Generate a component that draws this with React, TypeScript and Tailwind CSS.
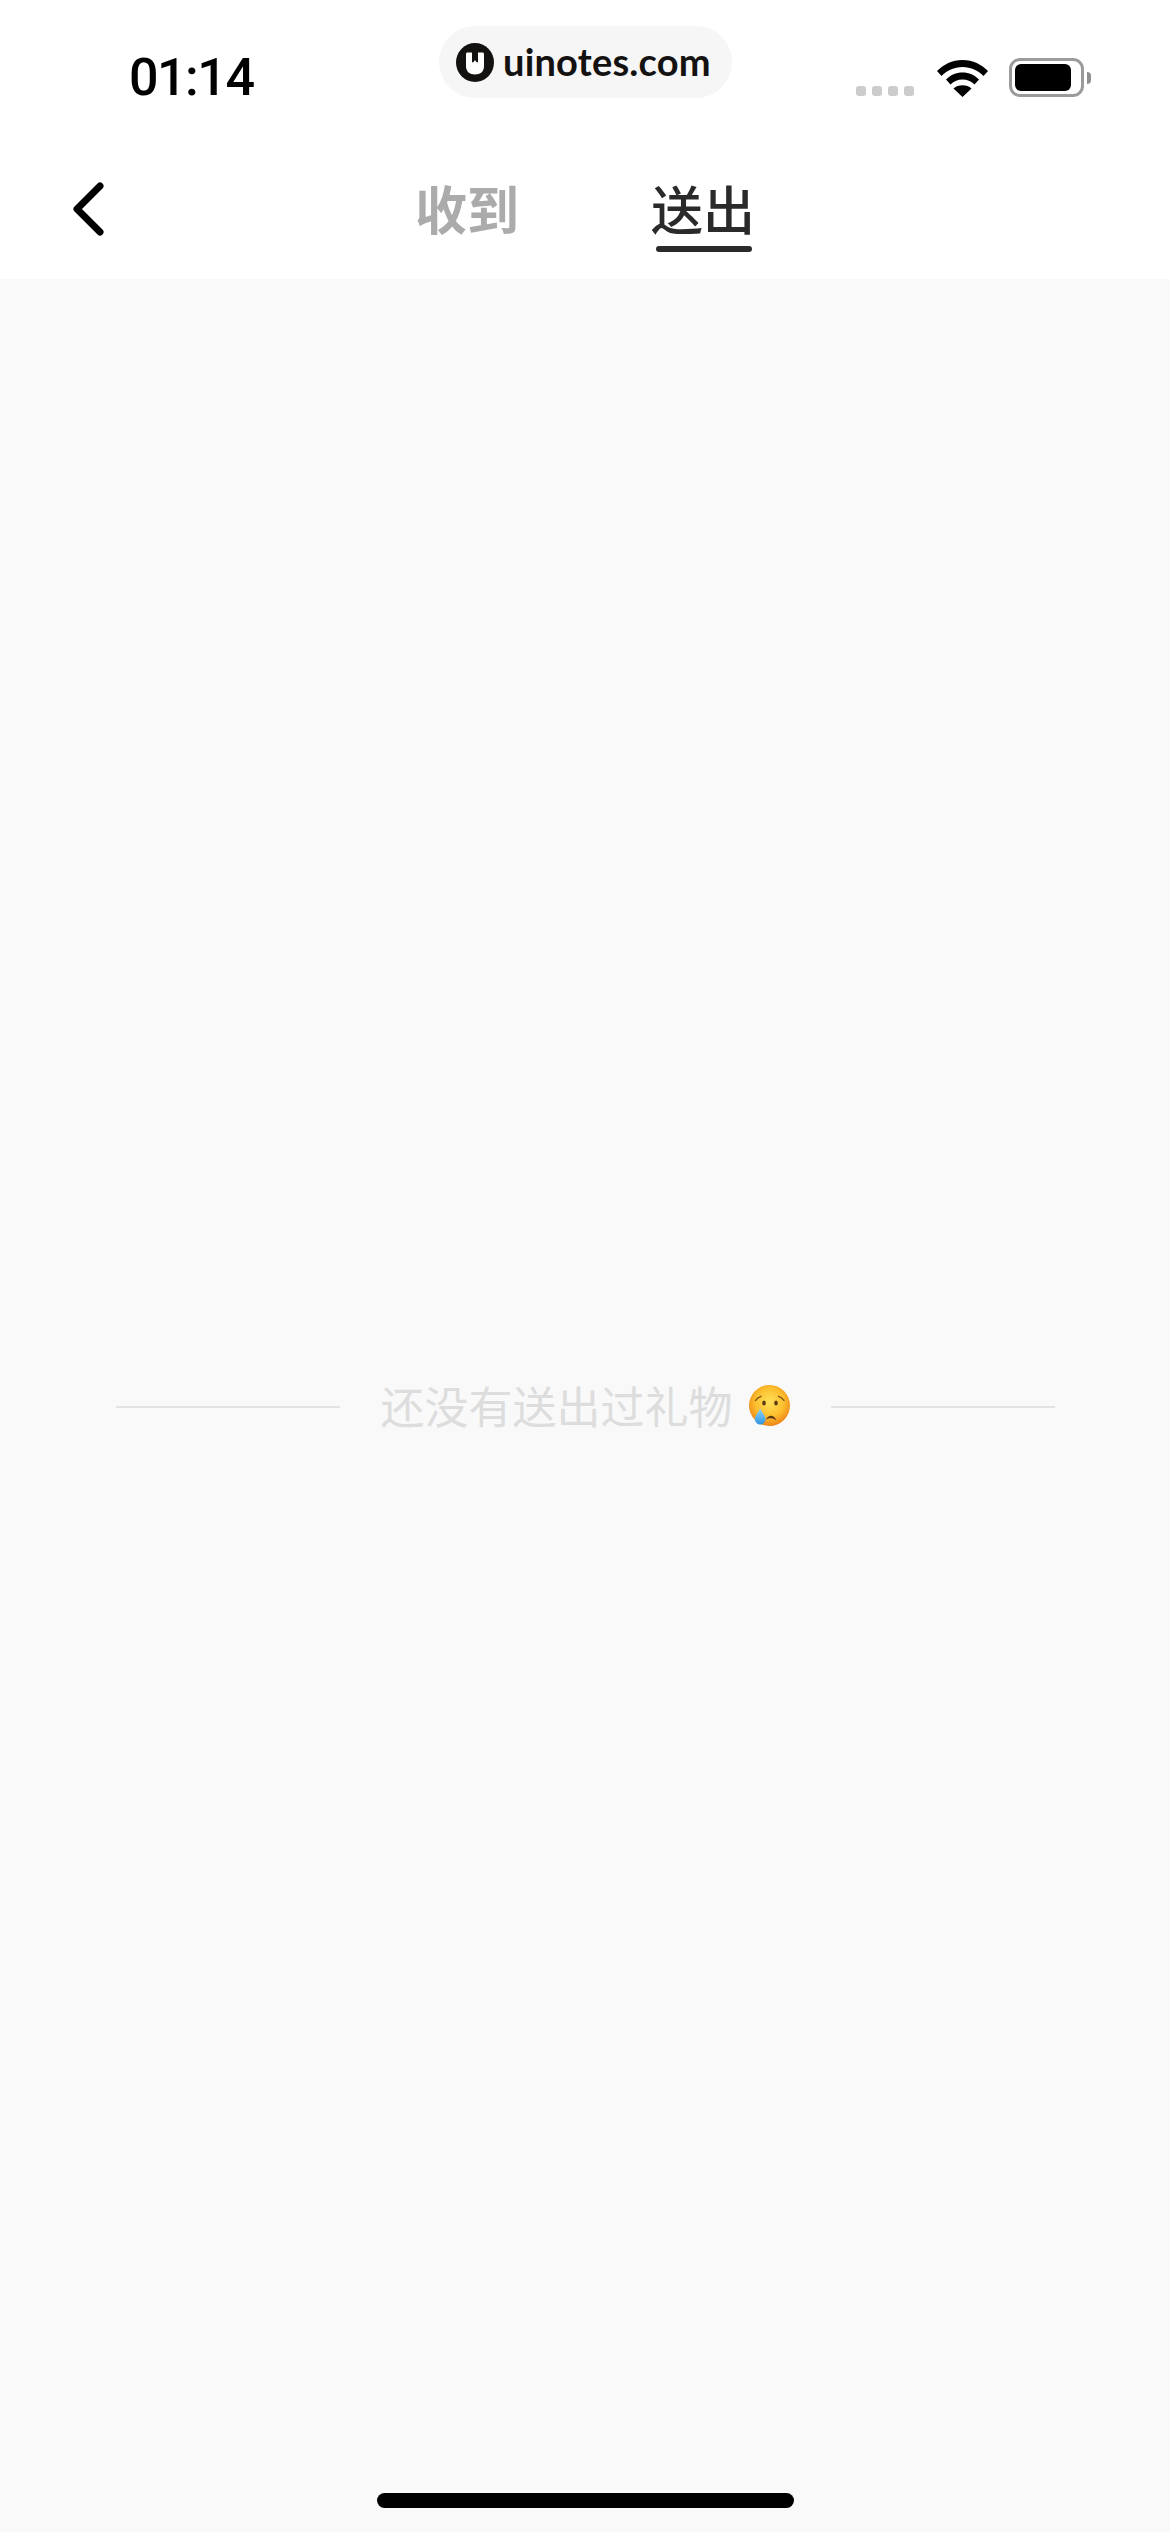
// App.tsx
const cjk = '[font-family:"Noto_Sans_CJK_SC",sans-serif]'

const UiNotesLogo = () => (
  <svg width="38" height="39" viewBox="0 0 38 39" className="shrink-0">
    <ellipse cx="19" cy="19.5" rx="19" ry="19.5" fill="#141211" />
    <path
      d="M10 11c0-1 .6-1.600 1.500-1.600h15c.9 0 1.500.6 1.500 1.600v12.500c0 5-3.700 8-9 8s-9-3-9-8z"
      fill="#fff"
    />
    <path d="M16 9v9.500c0 1 1 1.300 1.600.6l1.400-2.100 1.400 2.100c.6.7 1.600.4 1.600-.6V9z" fill="#141211" />
  </svg>
)

const WifiIcon = () => (
  <svg width="51" height="37" viewBox="0 0 51 37" className="shrink-0">
    <path d="M0 14.500C6.500 8 15 3.500 25.500 3.500S44.500 8 51 14.500l-4.500 5C41 14 34 10.500 25.500 10.500S10 14 4.500 19.500z" transform="translate(0 -3.500)" />
    <path d="M9 21c4.500-4.500 10-7 16.500-7S37.500 16.500 42 21l-4.500 5c-3.500-3.200-7.500-5-12-5s-8.500 1.800-12 5z" transform="translate(0 -1.500)" />
    <path d="M16.500 28.500c2.500-2 5.500-3.200 9-3.200s6.500 1.200 9 3.200L25.500 37z" />
  </svg>
)

const Battery = () => (
  <div className="flex items-center ml-[21px]">
    <div className="w-[75px] h-[39px] rounded-[11px] border-[3px] border-[#9b9b9b] p-[3px]">
      <div className="w-[56px] h-full rounded-[6px] bg-black" />
    </div>
    <div className="w-[4px] h-[12px] ml-[3px] rounded-r-full bg-[#8f8f8f]" />
  </div>
)

// emoji font is not available, so the crying face is drawn
const CryingFace = () => (
  <svg width="41" height="41" viewBox="0 0 41 41" className="shrink-0 ml-[16px] mb-[3px]">
    <defs>
      <radialGradient id="face" cx="50%" cy="42%" r="58%">
        <stop offset="0%" stopColor="#ffe05a" />
        <stop offset="60%" stopColor="#fcbf2e" />
        <stop offset="100%" stopColor="#ee8418" />
      </radialGradient>
      <linearGradient id="tear" x1="0" y1="0" x2="0" y2="1">
        <stop offset="0%" stopColor="#8fd4f8" />
        <stop offset="100%" stopColor="#2f95e0" />
      </linearGradient>
    </defs>
    <circle cx="20.500" cy="20.500" r="20.500" fill="url(#face)" />
    <ellipse cx="15" cy="18" rx="1.800" ry="2.600" fill="#5b3a14" />
    <ellipse cx="27" cy="18" rx="1.800" ry="2.600" fill="#5b3a14" />
    <path d="M6.500 15.500c1.200-2 3-3.500 5.500-4.200" fill="none" stroke="#7a4e18" strokeWidth="1.400" strokeLinecap="round" />
    <path d="M29.500 11.300c2.500.7 4.300 2.200 5.500 4.200" fill="none" stroke="#7a4e18" strokeWidth="1.400" strokeLinecap="round" />
    <path d="M17 34.500c1-2.500 3-3.800 5-3.800 2.300 0 4.200 1.500 5.300 4.500-1.800-1.300-3.400-2-5.300-2-1.800 0-3.500.4-5 1.300z" fill="#5b3a14" />
    <path d="M11.200 23.500c1.800 4 5.300 7 5.300 10.700a5.300 5.300 0 0 1-10.600 0c0-3.700 3.500-6.700 5.300-10.700z" fill="url(#tear)" />
  </svg>
)

export default function App() {
  return (
    <div className={`w-[1170px] h-[2532px] flex flex-col bg-[#f9f9f9] relative overflow-hidden ${cjk}`}>
      <header className="bg-white h-[279px] shrink-0">
        {/* status bar */}
        <div className="flex items-start h-[108px] pl-[129px] pr-[79px]">
          <div className="w-[310px] pt-[47px] text-[52px] leading-[62px] font-medium tracking-[-1.5px] text-black [font-family:Roboto,sans-serif]">
            01:14
          </div>
          <div className="mt-[26px] w-[293px] h-[72px] rounded-full bg-[#f6f6f6] flex items-center pl-[17px] gap-[9px]">
            <UiNotesLogo />
            <span className="pb-[2px] text-[38px] leading-none font-bold tracking-[0.2px] text-[#141211] [font-family:Lato,sans-serif]">
              uinotes.com
            </span>
          </div>
          <div className="ml-auto flex items-end pt-[58px]">
            <div className="flex gap-[6px] mb-[1px] mr-[23px]">
              <div className="w-[10px] h-[10px] rounded-[3px] bg-[#cccccc]" />
              <div className="w-[10px] h-[10px] rounded-[3px] bg-[#cccccc]" />
              <div className="w-[10px] h-[10px] rounded-[3px] bg-[#cccccc]" />
              <div className="w-[10px] h-[10px] rounded-[3px] bg-[#cccccc]" />
            </div>
            <WifiIcon />
            <Battery />
          </div>
        </div>

        {/* nav */}
        <div className="flex items-start pl-[73px] pt-[73px]">
          <svg width="32" height="54" viewBox="0 0 32 54" className="shrink-0 mt-[1px]" fill="none">
            <path d="M27 4 4 27l23 23" stroke="#000" strokeWidth="7" strokeLinecap="round" strokeLinejoin="round" />
          </svg>
        </div>
      </header>

      <div className="absolute left-[415px] top-[175px] flex gap-[132px]">
        <div className="w-[104px] text-[52px] leading-[66px] font-bold text-[#ababab]">收到</div>
        <div className="w-[104px]">
          <div className="text-[52px] leading-[66px] font-medium text-[#2a2a2a]">送出</div>
          <div className="w-[96px] h-[6px] ml-[5px] mt-[5px] rounded-full bg-[#2a2a2a]" />
        </div>
      </div>

      <main className="flex-1 flex items-center justify-center pt-[3px]">
        <div className="w-[224px] h-[2px] bg-[#e2e2e2]" />
        <span className="ml-[41px] pb-[5px] text-[44px] leading-[60px] text-[#dddddd]">还没有送出过礼物</span>
        <CryingFace />
        <div className="w-[224px] h-[2px] ml-[41px] bg-[#e2e2e2]" />
      </main>

      <div className="absolute bottom-[24px] left-[377px] w-[417px] h-[15px] rounded-full bg-black" />
    </div>
  )
}
